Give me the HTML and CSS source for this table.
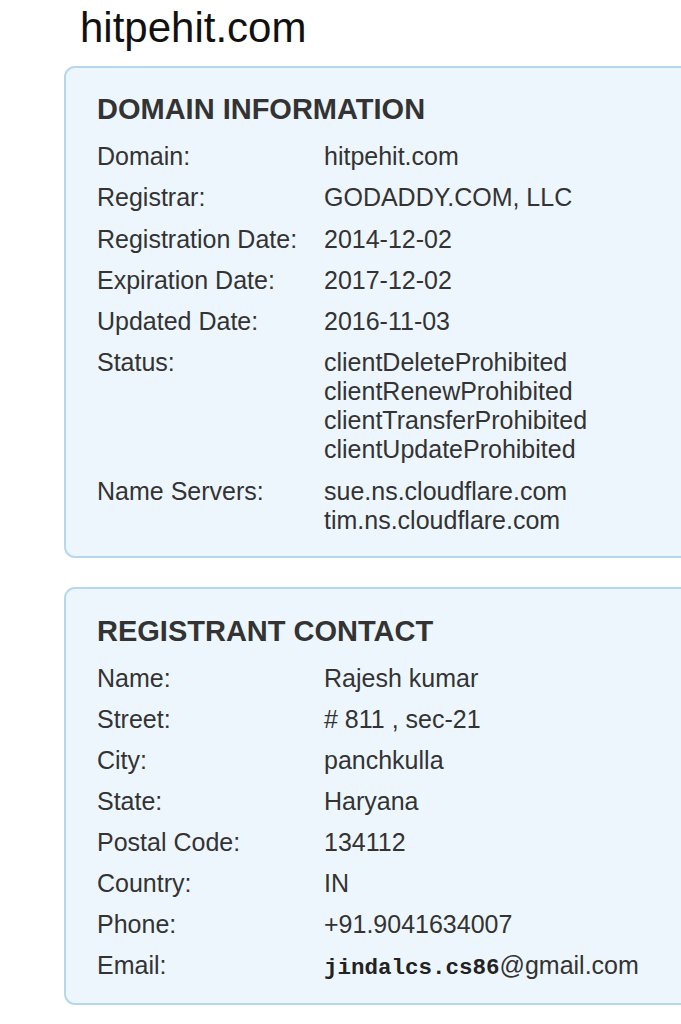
FILE: index.html
```html
<!DOCTYPE html>
<html>
<head>
<meta charset="utf-8">
<link rel="stylesheet" href="styles.css">
</head>
<body>
<h1 class="title">hitpehit.com</h1>
<section class="card card-domain">
  <h2 class="card-title">DOMAIN INFORMATION</h2>
  <div class="rows">
    <div class="row"><div class="label">Domain:</div><div class="value">hitpehit.com</div></div>
    <div class="row"><div class="label">Registrar:</div><div class="value">GODADDY.COM, LLC</div></div>
    <div class="row"><div class="label">Registration Date:</div><div class="value">2014-12-02</div></div>
    <div class="row"><div class="label">Expiration Date:</div><div class="value">2017-12-02</div></div>
    <div class="row"><div class="label">Updated Date:</div><div class="value">2016-11-03</div></div>
    <div class="row"><div class="label">Status:</div><div class="value">clientDeleteProhibited<br>clientRenewProhibited<br>clientTransferProhibited<br>clientUpdateProhibited</div></div>
    <div class="row"><div class="label">Name Servers:</div><div class="value">sue.ns.cloudflare.com<br>tim.ns.cloudflare.com</div></div>
  </div>
</section>
<section class="card card-contact">
  <h2 class="card-title">REGISTRANT CONTACT</h2>
  <div class="rows">
    <div class="row"><div class="label">Name:</div><div class="value">Rajesh kumar</div></div>
    <div class="row"><div class="label">Street:</div><div class="value"># 811 , sec-21</div></div>
    <div class="row"><div class="label">City:</div><div class="value">panchkulla</div></div>
    <div class="row"><div class="label">State:</div><div class="value">Haryana</div></div>
    <div class="row"><div class="label">Postal Code:</div><div class="value">134112</div></div>
    <div class="row"><div class="label">Country:</div><div class="value">IN</div></div>
    <div class="row"><div class="label">Phone:</div><div class="value">+91.9041634007</div></div>
    <div class="row"><div class="label">Email:</div><div class="value"><b class="mono">jindalcs.cs86</b>@gmail.com</div></div>
  </div>
</section>
</body>
</html>
```
FILE: styles.css
```css
html, body {
  margin: 0;
  padding: 0;
  background: #ffffff;
  overflow: hidden;
}
body {
  font-family: "Liberation Sans", Arial, sans-serif;
  color: #333333;
  width: 681px;
}
.title {
  margin: 4px 0 0 0;
  padding-left: 80px;
  font-size: 42px;
  line-height: 48px;
  font-weight: normal;
  color: #111111;
}
.card {
  margin: 14px 0 0 64px;
  width: 680px;
  box-sizing: border-box;
  background: #eef6fd;
  border: 2px solid #b6d8ee;
  border-radius: 11px;
  padding: 25px 0 20px 31px;
}
.card-domain {
  padding-bottom: 21px;
}
.card-contact {
  margin-top: 29px;
  padding-top: 26px;
}
.card-title {
  margin: 0;
  font-size: 29px;
  line-height: 32px;
  font-weight: bold;
  color: #333333;
}
.rows {
  margin-top: 17px;
  display: flex;
  flex-direction: column;
  gap: 12px;
}
.card-domain .rows {
  gap: 12.3px;
}
.row {
  display: flex;
  font-size: 25px;
  line-height: 29px;
}
.label {
  width: 227px;
  flex: none;
}
.value {
  flex: 1;
}
.mono {
  font-family: "Liberation Mono", "Courier New", monospace;
  font-size: 22.5px;
  font-weight: bold;
  color: #222222;
}
```
